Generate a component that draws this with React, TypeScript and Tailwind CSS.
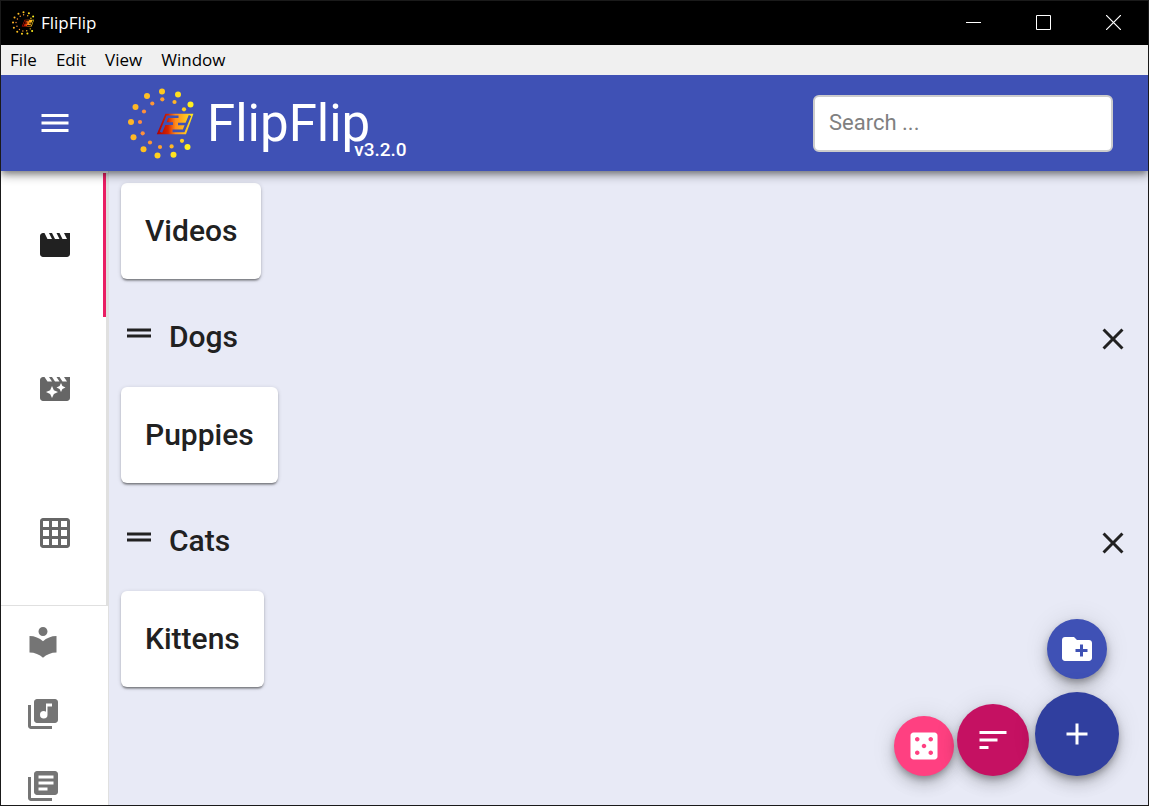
import type { ReactNode } from 'react';
import type { IconType } from 'react-icons';
import {
  MdAdd,
  MdCasino,
  MdClose,
  MdCreateNewFolder,
  MdDragHandle,
  MdGridOn,
  MdLibraryBooks,
  MdLibraryMusic,
  MdLocalLibrary,
  MdMenu,
  MdMovie,
  MdMovieFilter,
  MdSort,
} from 'react-icons/md';

// Dots of the logo: x, y, colour.
const outerDots: [number, number, string][] = [
  [34, 3.5, '#ffc91f'],
  [50, 6.5, '#ffdf1f'],
  [62.5, 16.5, '#fff01f'],
  [19, 8, '#ffbf26'],
  [7.5, 19, '#ffb726'],
  [3, 34, '#ffb526'],
  [5.5, 49.3, '#ffb826'],
  [15.5, 61.3, '#ffc01f'],
  [29.5, 67.5, '#ffd01f'],
  [45.5, 66.8, '#ffe31f'],
  [59.5, 59, '#fff01f'],
];
const innerDots: [number, number, string][] = [
  [34.3, 11.3, '#ffa02e'],
  [46.5, 14, '#ffb526'],
  [56, 21.3, '#ffd020'],
  [24.3, 15.5, '#ff9636'],
  [16, 23.5, '#ff903c'],
  [12, 34, '#ff8d40'],
  [14.7, 45.3, '#ff903c'],
  [22, 54.5, '#ff9636'],
  [32, 59, '#ffa22e'],
  [43.6, 58.4, '#ffb726'],
  [54, 52.8, '#ffcf20'],
];

function Logo({ className, id }: { className: string; id: string }) {
  return (
    <svg viewBox="0 0 68 71" className={className} aria-hidden="true">
      <defs>
        <linearGradient id={id} x1="29" y1="0" x2="66" y2="0" gradientUnits="userSpaceOnUse">
          <stop offset="0" stopColor="#b00000" />
          <stop offset="0.3" stopColor="#d42400" />
          <stop offset="0.5" stopColor="#ff8a1c" />
          <stop offset="1" stopColor="#fff01f" />
        </linearGradient>
        <mask id={`${id}-letters`} maskUnits="userSpaceOnUse" x="0" y="0" width="68" height="71">
          <rect width="68" height="71" fill="white" />
          <g fill="none" stroke="black" strokeWidth="2.6">
            <path d="M33 44.2L39.4 28.7H50.5M36.6 35.6H45" />
            <path d="M62 27.4L55.6 42.9H44.5M58.4 36H50" />
          </g>
        </mask>
      </defs>
      {outerDots.map(([x, y, fill]) => (
        <circle key={`${x}-${y}`} cx={x} cy={y} r="3" fill={fill} />
      ))}
      {innerDots.map(([x, y, fill]) => (
        <circle key={`${x}-${y}`} cx={x} cy={y} r="2.1" fill={fill} />
      ))}
      <path d="M37.4 25.8H65.4L58 46.2H28.8Z" fill={`url(#${id})`} mask={`url(#${id}-letters)`} />
    </svg>
  );
}

const tabs: { label: string; icon: IconType }[] = [
  { label: 'Scenes', icon: MdMovie },
  { label: 'Scene generators', icon: MdMovieFilter },
  { label: 'Grids', icon: MdGridOn },
];

const libraries: { label: string; icon: IconType }[] = [
  { label: 'Library', icon: MdLocalLibrary },
  { label: 'Audio library', icon: MdLibraryMusic },
  { label: 'Script library', icon: MdLibraryBooks },
];

const groups = [
  { name: 'Dogs', scenes: ['Puppies'] },
  { name: 'Cats', scenes: ['Kittens'] },
];

function SceneCard({ name }: { name: string }) {
  return (
    <button className="rounded-md bg-white p-6 text-[30px] leading-[48px] font-medium shadow-[0_3px_2px_-2px_rgba(0,0,0,0.3),0_2px_2px_0_rgba(0,0,0,0.2),0_1px_4px_0_rgba(0,0,0,0.16)]">
      {name}
    </button>
  );
}

function Fab({ label, className, children }: { label: string; className: string; children: ReactNode }) {
  return (
    <button
      aria-label={label}
      className={`flex items-center justify-center rounded-full text-4xl text-white shadow-[0_4px_7px_-1px_rgba(0,0,0,0.3),0_9px_15px_0_rgba(0,0,0,0.15),0_1px_26px_0_rgba(0,0,0,0.1)] ${className}`}
    >
      {children}
    </button>
  );
}

function WindowControls() {
  return (
    <div className="flex h-full gap-px pb-px text-white">
      <button aria-label="Minimize" className="flex w-[69px] items-center justify-center">
        <svg width="15" height="15" aria-hidden="true">
          <path d="M0 7.5H15" stroke="currentColor" />
        </svg>
      </button>
      <button aria-label="Maximize" className="flex w-[69px] items-center justify-center">
        <svg width="15" height="15" aria-hidden="true">
          <path d="M.5 .5H14.5V14.5H.5Z" fill="none" stroke="currentColor" />
        </svg>
      </button>
      <button aria-label="Close" className="flex w-[69px] items-center justify-center">
        <svg width="15" height="15" aria-hidden="true">
          <path d="M0 0L15 15M15 0L0 15" stroke="currentColor" strokeWidth="1.2" />
        </svg>
      </button>
    </div>
  );
}

export default function App() {
  return (
    <div className="flex h-screen flex-col overflow-hidden border border-[#1a1a1a] bg-[#e8eaf6] font-['Roboto',sans-serif] text-[#212121]">
      <div className="flex h-11 shrink-0 items-center bg-black pl-[11px] font-['Open_Sans',sans-serif] text-white">
        <Logo id="logo-small" className="h-6 w-[23px]" />
        <span className="ml-1.5 flex-1 text-[17px]">FlipFlip</span>
        <WindowControls />
      </div>

      <nav className="z-20 flex h-[30px] shrink-0 items-center gap-[19px] bg-[#f0f0f0] pl-[9px] font-['Open_Sans',sans-serif] text-[17px] text-black">
        <button>File</button>
        <button>Edit</button>
        <button>View</button>
        <button>Window</button>
      </nav>

      <header className="z-10 flex h-24 shrink-0 items-center bg-[#3f51b5] pr-[35px] pl-9 text-white shadow-[0_3px_6px_-1px_rgba(0,0,0,0.35),0_6px_8px_0_rgba(0,0,0,0.18),0_1px_15px_0_rgba(0,0,0,0.12)]">
        <button aria-label="Open menu" className="text-4xl">
          <MdMenu />
        </button>
        <Logo id="logo-large" className="ml-[55px] h-[71px] w-[68px]" />
        <div className="ml-[11px] flex-1 pt-0.5">
          <h1 className="relative inline-block text-[51px] leading-[60px]">
            FlipFlip
            <span className="absolute top-11 left-full -ml-4 text-[19px] leading-6 font-medium">v3.2.0</span>
          </h1>
        </div>
        <input
          type="text"
          aria-label="Search"
          placeholder="Search ..."
          className="h-[57px] w-[300px] rounded-md border-2 border-[#cccccc] bg-white px-3.5 pb-0.5 text-[22px] text-[#212121] placeholder:text-[#808080]"
        />
      </header>

      <div className="flex min-h-0 flex-1">
        <aside className="flex w-[108px] shrink-0 flex-col overflow-hidden border-r border-[#e0e0e0] bg-white">
          <div role="tablist" aria-orientation="vertical" className="mt-0.5 border-r-2 border-b border-[#e0e0e0]">
            {tabs.map(({ label, icon: Icon }, i) => (
              <button
                key={label}
                role="tab"
                aria-label={label}
                aria-selected={i === 0}
                className="flex h-36 w-full items-center justify-center border-r-[3px] border-transparent pl-1.5 text-4xl text-[#666666] aria-selected:border-[#e91e63] aria-selected:text-[#212121]"
              >
                <Icon />
              </button>
            ))}
          </div>
          <ul>
            {libraries.map(({ label, icon: Icon }) => (
              <li key={label}>
                <button aria-label={label} className="flex h-[72px] w-full items-center pl-6 text-4xl text-[#757575]">
                  <Icon />
                </button>
              </li>
            ))}
          </ul>
        </aside>

        <main className="relative min-w-0 flex-1 px-3 pt-3">
          <SceneCard name="Videos" />
          {groups.map(({ name, scenes }) => (
            <section key={name}>
              <div className="flex h-[108px] items-center pr-[5px]">
                <button aria-label={`Move ${name}`} className="text-4xl">
                  <MdDragHandle />
                </button>
                <h2 className="ml-3 flex-1 pt-2 text-[30px] leading-[48px] font-medium">{name}</h2>
                <button aria-label={`Delete ${name}`} className="pt-3 text-4xl">
                  <MdClose />
                </button>
              </div>
              <div className="flex gap-3">
                {scenes.map((scene) => (
                  <SceneCard key={scene} name={scene} />
                ))}
              </div>
            </section>
          ))}

          <div className="absolute right-[29px] bottom-[29px] flex items-end">
            <Fab label="Random scene" className="mr-[3px] size-[60px] bg-[#ff4081]">
              <MdCasino />
            </Fab>
            <Fab label="Sort" className="mr-1.5 size-[72px] bg-[#c51162]">
              <MdSort />
            </Fab>
            <div className="flex flex-col items-center gap-[13px]">
              <Fab label="Add group" className="size-[60px] bg-[#3f51b5]">
                <MdCreateNewFolder />
              </Fab>
              <Fab label="Add scene" className="size-[84px] bg-[#303f9f]">
                <MdAdd />
              </Fab>
            </div>
          </div>
        </main>
      </div>
    </div>
  );
}
